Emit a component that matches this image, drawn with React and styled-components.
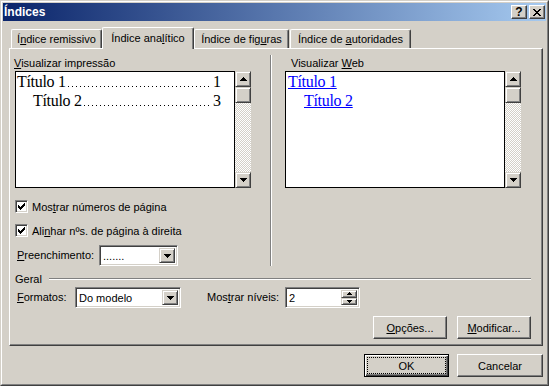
import React from 'react';
import styled, { createGlobalStyle, css } from 'styled-components';

const FACE = '#D4D0C8';
const LIGHT = '#FFFFFF';
const SHADOW = '#808080';
const DARK = '#404040';
const UI_FONT = "'Liberation Sans', Arial, sans-serif";
const SERIF = "'Liberation Serif', 'Times New Roman', serif";

const Global = createGlobalStyle`
  html, body { margin: 0; padding: 0; background: ${FACE}; }
  body { font-family: ${UI_FONT}; font-size: 11px; color: #000; }
  * { box-sizing: border-box; }
`;

const raised = css`
  background: ${FACE};
  border: 1px solid;
  border-color: ${FACE} ${DARK} ${DARK} ${FACE};
  box-shadow: inset 1px 1px ${LIGHT}, inset -1px -1px ${SHADOW};
`;

const sunken = css`
  border: 1px solid;
  border-color: ${SHADOW} ${LIGHT} ${LIGHT} ${SHADOW};
  box-shadow: inset 1px 1px ${DARK}, inset -1px -1px ${FACE};
`;

const Window = styled.div`
  width: 549px;
  height: 386px;
  background: ${FACE};
  border: 1px solid;
  border-color: ${FACE} ${DARK} ${DARK} ${FACE};
  display: flex;
`;

const WindowInner = styled.div`
  flex: 1;
  display: flex;
  flex-direction: column;
  border: 1px solid;
  border-color: ${LIGHT} ${SHADOW} ${SHADOW} ${LIGHT};
  padding: 1px;
`;

const TitleBar = styled.div`
  flex: none;
  height: 18px;
  background: linear-gradient(to right, #0A246A, #A6CAF0);
  display: flex;
  align-items: center;
  justify-content: space-between;
  padding: 0 1px 0 1px;
`;

const TitleText = styled.span`
  color: #fff;
  font-family: ${UI_FONT};
  font-weight: bold;
  font-size: 12px;
  line-height: 18px;
`;

const TitleButtons = styled.div`
  display: flex;
  gap: 2px;
`;

const TitleButton = styled.div`
  width: 16px;
  height: 14px;
  background: ${FACE};
  border: 1px solid;
  border-color: ${LIGHT} ${DARK} ${DARK} ${LIGHT};
  box-shadow: inset -1px -1px ${SHADOW};
  display: flex;
  align-items: center;
  justify-content: center;
  font-weight: bold;
  font-size: 12px;
  line-height: 1;
  color: #000;
  svg { display: block; }
`;

const Body = styled.div`
  flex: 1;
  display: flex;
  flex-direction: column;
  padding: 6px 3px 0 6px;
`;

const TabRow = styled.div`
  display: flex;
  align-items: flex-end;
  height: 21px;
  padding-left: 2px;
`;

const Tab = styled.div`
  width: ${(p) => p.$w}px;
  margin-left: ${(p) => p.$ml || 0}px;
  height: 19px;
  background: ${FACE};
  border-top: 1px solid ${LIGHT};
  border-left: 1px solid ${LIGHT};
  border-right: 1px solid ${DARK};
  border-radius: 2px 2px 0 0;
  box-shadow: inset -1px 0 ${SHADOW};
  display: flex;
  align-items: center;
  justify-content: center;
  white-space: nowrap;
  ${(p) =>
    p.$active &&
    css`
      height: 22px;
      margin-bottom: -1px;
      position: relative;
      z-index: 1;
      padding-bottom: 2px;
    `}
`;

const Key = styled.span`
  text-decoration: underline;
  text-underline-offset: 1px;
`;

const Panel = styled.div`
  width: 534px;
  height: 298px;
  border: 1px solid;
  border-color: ${LIGHT} ${DARK} ${DARK} ${LIGHT};
  box-shadow: inset -1px -1px ${SHADOW};
  padding: 6px 0 0 5px;
  display: flex;
  flex-direction: column;
`;

const TopSection = styled.div`
  display: flex;
  height: 211px;
`;

const Column = styled.div`
  width: 236px;
  display: flex;
  flex-direction: column;
  padding-top: 2px;
`;

const Separator = styled.div`
  width: 2px;
  margin: 0 13px 0 19px;
  border-left: 1px solid ${SHADOW};
  border-right: 1px solid ${LIGHT};
`;

const Label = styled.div`
  height: 13px;
  line-height: 13px;
  white-space: nowrap;
  margin-left: ${(p) => p.$indent || 0}px;
  width: ${(p) => (p.$w ? `${p.$w}px` : 'auto')};
  flex: none;
`;

const PreviewRow = styled.div`
  display: flex;
  height: 117px;
  margin-top: 1px;
`;

const PreviewBox = styled.div`
  width: 220px;
  background: #fff;
  border: 1px solid #000;
  padding: 0 0 0 ${(p) => p.$pad}px;
  font-family: ${SERIF};
  font-size: 16px;
  line-height: 19px;
`;

const PrintLine = styled.div`
  display: flex;
  align-items: baseline;
  width: ${(p) => 204 - p.$indent}px;
  margin-left: ${(p) => p.$indent}px;
  white-space: nowrap;
`;

const EntryText = styled.span`
  letter-spacing: -0.3px;
  flex: none;
`;

const Leader = styled.span`
  flex: 1;
  align-self: stretch;
  margin: 0 1px 0 2px;
  background-image: linear-gradient(to right, #000 1px, transparent 1px);
  background-size: 4px 1px;
  background-repeat: repeat-x;
  background-position: 0 14px;
`;

const LinkLine = styled.div`
  margin-left: ${(p) => p.$indent}px;
  color: #0000ff;
  text-decoration: underline;
  letter-spacing: -0.3px;
  white-space: nowrap;
`;

const ScrollBar = styled.div`
  width: 16px;
  display: flex;
  flex-direction: column;
`;

const ScrollButton = styled.div`
  ${raised};
  width: 16px;
  height: 16px;
  flex: none;
  display: flex;
  align-items: center;
  justify-content: center;
  svg { display: block; }
`;

const ScrollTrack = styled.div`
  flex: 1;
  background-color: #fff;
  background-image: conic-gradient(${FACE} 25%, #fff 0 50%, ${FACE} 0 75%, #fff 0);
  background-size: 2px 2px;
`;

const CheckRow = styled.div`
  display: flex;
  align-items: center;
  gap: 4px;
  height: 13px;
  margin-top: ${(p) => p.$mt}px;
  white-space: nowrap;
`;

const CheckBox = styled.div`
  ${sunken};
  width: 13px;
  height: 13px;
  background: #fff;
  display: flex;
  align-items: center;
  justify-content: center;
  svg { display: block; }
`;

const FieldRow = styled.div`
  display: flex;
  align-items: center;
  height: 21px;
  margin-top: ${(p) => p.$mt}px;
`;

const Field = styled.div`
  ${sunken};
  width: ${(p) => p.$w}px;
  height: 21px;
  background: #fff;
  display: flex;
  align-items: stretch;
  padding: 2px;
  flex: none;
`;

const FieldText = styled.div`
  flex: 1;
  padding-left: 1px;
  line-height: 17px;
  white-space: nowrap;
`;

const DropButton = styled.div`
  ${raised};
  width: 16px;
  display: flex;
  align-items: center;
  justify-content: center;
  svg { display: block; }
`;

const SpinButtons = styled.div`
  width: 16px;
  display: flex;
  flex-direction: column;
`;

const SpinButton = styled.div`
  ${raised};
  flex: 1;
  display: flex;
  align-items: center;
  justify-content: center;
  svg { display: block; }
`;

const GroupRow = styled.div`
  display: flex;
  align-items: center;
  height: 13px;
  margin-top: 6px;
  margin-right: 11px;
`;

const GroupLine = styled.div`
  flex: 1;
  height: 2px;
  margin-left: 7px;
  border-top: 1px solid ${SHADOW};
  border-bottom: 1px solid ${LIGHT};
`;

const ButtonRow = styled.div`
  display: flex;
  justify-content: flex-end;
  gap: ${(p) => p.$gap}px;
  margin-top: ${(p) => p.$mt}px;
  margin-right: ${(p) => p.$mr}px;
`;

const PushButton = styled.div`
  width: ${(p) => p.$w}px;
  height: 23px;
  background: ${FACE};
  border: 1px solid;
  border-color: ${LIGHT} ${DARK} ${DARK} ${LIGHT};
  box-shadow: inset -1px -1px ${SHADOW}, inset 1px 1px ${FACE};
  display: flex;
  padding: 2px;
  ${(p) =>
    p.$default &&
    css`
      border-color: #000;
      box-shadow: inset 1px 1px ${LIGHT}, inset -1px -1px ${DARK}, inset -2px -2px ${SHADOW};
    `}
`;

const ButtonFace = styled.div`
  flex: 1;
  display: flex;
  align-items: center;
  justify-content: center;
  white-space: nowrap;
  border: 1px dotted ${(p) => (p.$focus ? '#000' : 'transparent')};
`;

const DownArrow = () => (
  <svg width="7" height="4" viewBox="0 0 7 4" shapeRendering="crispEdges">
    <path d="M0 0h7v1h-1v1h-1v1h-1v1h-1v-1h-1v-1h-1v-1h-1z" fill="#000" />
  </svg>
);

const UpArrow = () => (
  <svg width="7" height="4" viewBox="0 0 7 4" shapeRendering="crispEdges">
    <path d="M3 0h1v1h1v1h1v1h1v1h-7v-1h1v-1h1v-1h1z" fill="#000" />
  </svg>
);

const SmallUp = () => (
  <svg width="5" height="3" viewBox="0 0 5 3" shapeRendering="crispEdges">
    <path d="M2 0h1v1h1v1h1v1h-5v-1h1v-1h1z" fill="#000" />
  </svg>
);

const SmallDown = () => (
  <svg width="5" height="3" viewBox="0 0 5 3" shapeRendering="crispEdges">
    <path d="M0 0h5v1h-1v1h-1v1h-1v-1h-1v-1h-1z" fill="#000" />
  </svg>
);

const Check = () => (
  <svg width="7" height="7" viewBox="0 0 7 7" shapeRendering="crispEdges">
    <path
      d="M6 0h1v1h-1zM5 1h2v1h-2zM0 2h1v1h-1zM4 2h3v1h-3zM0 3h2v1h-2zM3 3h3v1h-3zM0 4h5v1h-5zM1 5h3v1h-3zM2 6h1v1h-1z"
      fill="#000"
    />
  </svg>
);

const CloseGlyph = () => (
  <svg width="8" height="7" viewBox="0 0 8 7" shapeRendering="crispEdges">
    <path
      d="M0 0h2v1h-2zM6 0h2v1h-2zM1 1h2v1h-2zM5 1h2v1h-2zM2 2h4v1h-4zM3 3h2v1h-2zM2 4h4v1h-4zM1 5h2v1h-2zM5 5h2v1h-2zM0 6h2v1h-2zM6 6h2v1h-2z"
      fill="#000"
    />
  </svg>
);

const VScroll = () => (
  <ScrollBar>
    <ScrollButton>
      <UpArrow />
    </ScrollButton>
    <ScrollButton />
    <ScrollTrack />
    <ScrollButton>
      <DownArrow />
    </ScrollButton>
  </ScrollBar>
);

const Combo = ({ w, value }) => (
  <Field $w={w}>
    <FieldText>{value}</FieldText>
    <DropButton>
      <DownArrow />
    </DropButton>
  </Field>
);

export default function App() {
  return (
    <>
      <Global />
      <Window>
        <WindowInner>
          <TitleBar>
            <TitleText>Índices</TitleText>
            <TitleButtons>
              <TitleButton>?</TitleButton>
              <TitleButton>
                <CloseGlyph />
              </TitleButton>
            </TitleButtons>
          </TitleBar>
          <Body>
            <TabRow>
              <Tab $w={91}>
                <span>
                  Í<Key>n</Key>dice remissivo
                </span>
              </Tab>
              <Tab $w={92} $active>
                <span>
                  Índice ana<Key>l</Key>ítico
                </span>
              </Tab>
              <Tab $w={95}>
                <span>
                  Índice de fig<Key>u</Key>ras
                </span>
              </Tab>
              <Tab $w={121} $ml={1}>
                <span>
                  Índice de <Key>a</Key>utoridades
                </span>
              </Tab>
            </TabRow>
            <Panel>
              <TopSection>
                <Column>
                  <Label $indent={-1}>
                    <Key>V</Key>isualizar impressão
                  </Label>
                  <PreviewRow>
                    <PreviewBox $pad={1}>
                      <PrintLine $indent={0}>
                        <EntryText>Título 1</EntryText>
                        <Leader />
                        <span>1</span>
                      </PrintLine>
                      <PrintLine $indent={16}>
                        <EntryText>Título 2</EntryText>
                        <Leader />
                        <span>3</span>
                      </PrintLine>
                    </PreviewBox>
                    <VScroll />
                  </PreviewRow>
                  <CheckRow $mt={12}>
                    <CheckBox>
                      <Check />
                    </CheckBox>
                    <span>
                      Mos<Key>t</Key>rar números de página
                    </span>
                  </CheckRow>
                  <CheckRow $mt={11}>
                    <CheckBox>
                      <Check />
                    </CheckBox>
                    <span>
                      Ali<Key>n</Key>har nºs. de página à direita
                    </span>
                  </CheckRow>
                  <FieldRow $mt={8}>
                    <Label $indent={2} $w={82}>
                      <Key>P</Key>reenchimento:
                    </Label>
                    <Combo w={79} value="......." />
                  </FieldRow>
                </Column>
                <Separator />
                <Column>
                  <Label $indent={6}>
                    Visualizar <Key>W</Key>eb
                  </Label>
                  <PreviewRow>
                    <PreviewBox $pad={2}>
                      <LinkLine $indent={0}>Título 1</LinkLine>
                      <LinkLine $indent={16}>Título 2</LinkLine>
                    </PreviewBox>
                    <VScroll />
                  </PreviewRow>
                </Column>
              </TopSection>
              <GroupRow>
                <span>Geral</span>
                <GroupLine />
              </GroupRow>
              <FieldRow $mt={2}>
                <Label $indent={2} $w={58}>
                  <Key>F</Key>ormatos:
                </Label>
                <Combo w={106} value="Do modelo" />
                <Label $indent={26} $w={78}>
                  Mos<Key>t</Key>rar níveis:
                </Label>
                <Field $w={75}>
                  <FieldText>2</FieldText>
                  <SpinButtons>
                    <SpinButton>
                      <SmallUp />
                    </SpinButton>
                    <SpinButton>
                      <SmallDown />
                    </SpinButton>
                  </SpinButtons>
                </Field>
              </FieldRow>
              <ButtonRow $gap={10} $mt={8} $mr={11}>
                <PushButton $w={74}>
                  <ButtonFace>
                    <Key>O</Key>pções...
                  </ButtonFace>
                </PushButton>
                <PushButton $w={74}>
                  <ButtonFace>
                    <Key>M</Key>odificar...
                  </ButtonFace>
                </PushButton>
              </ButtonRow>
            </Panel>
            <ButtonRow $gap={8} $mt={8} $mr={0}>
              <PushButton $w={85} $default>
                <ButtonFace $focus>OK</ButtonFace>
              </PushButton>
              <PushButton $w={86}>
                <ButtonFace>Cancelar</ButtonFace>
              </PushButton>
            </ButtonRow>
          </Body>
        </WindowInner>
      </Window>
    </>
  );
}
